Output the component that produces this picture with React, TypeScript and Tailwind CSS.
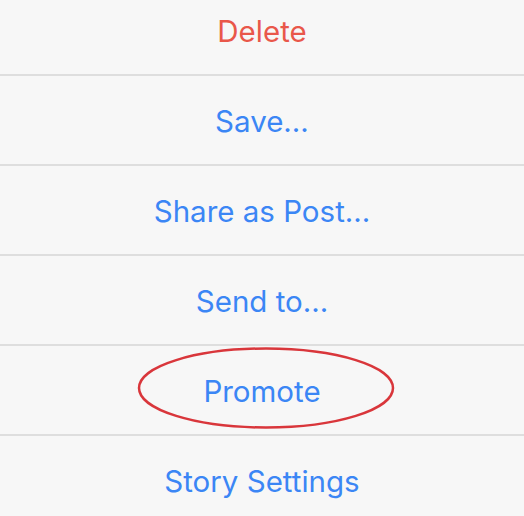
const items = [
  { label: 'Delete', destructive: true },
  { label: 'Save...' },
  { label: 'Share as Post...' },
  { label: 'Send to...' },
  { label: 'Promote', circled: true },
  { label: 'Story Settings' },
]

export default function App() {
  return (
    <div
      className="h-[516px] w-[524px] overflow-hidden bg-[#f7f7f7]"
      style={{ fontFamily: 'Inter, "Liberation Sans", sans-serif' }}
    >
      <div className="-mt-[14px] flex flex-col">
        {items.map((item) => (
          <div
            key={item.label}
            className="relative flex h-[90px] shrink-0 items-center justify-center border-b-2 border-[#dedede] pt-[3px]"
          >
            <span
              className={`text-[29.5px] tracking-[0px] ${
                item.destructive ? 'text-[#e9574a]' : 'text-[#3b86f5]'
              }`}
            >
              {item.label}
            </span>
            {item.circled && (
              <svg
                className="pointer-events-none absolute left-[137px] top-0"
                width="258"
                height="84"
                viewBox="0 0 258 84"
              >
                <ellipse
                  cx="129"
                  cy="42"
                  rx="127"
                  ry="39.5"
                  fill="none"
                  stroke="#d9363b"
                  strokeWidth="2.5"
                />
              </svg>
            )}
          </div>
        ))}
      </div>
    </div>
  )
}
